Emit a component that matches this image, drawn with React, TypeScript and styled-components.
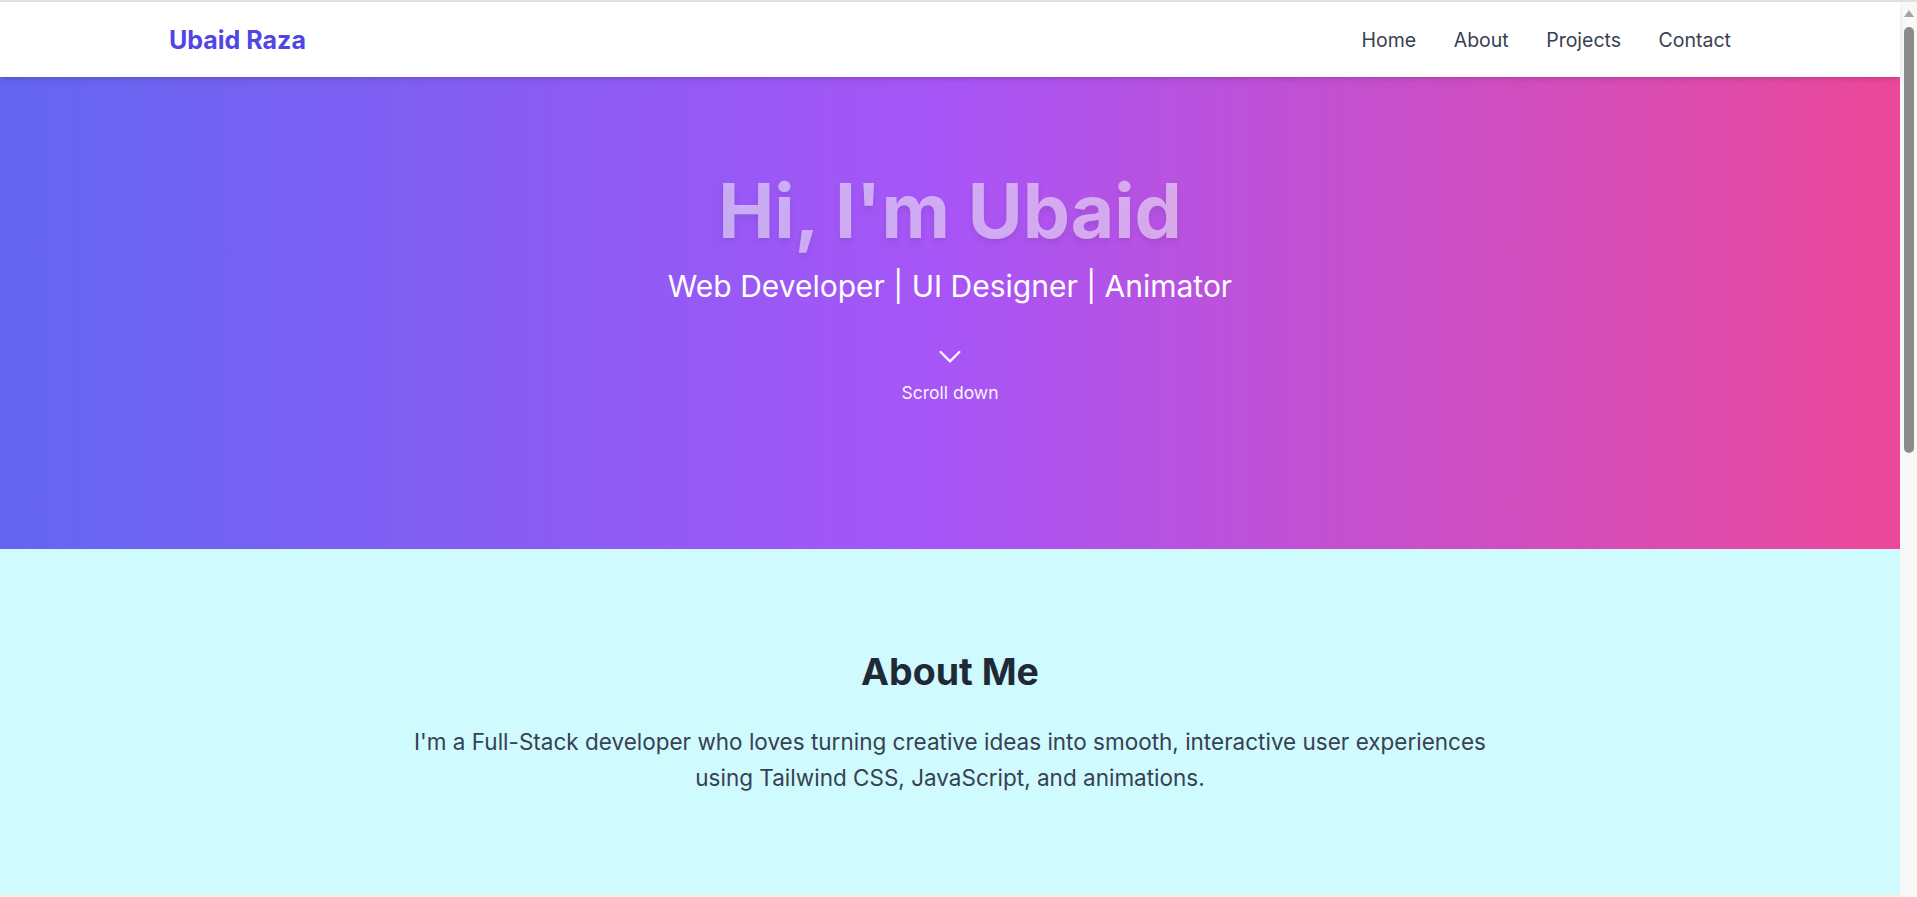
import styled, { createGlobalStyle } from "styled-components";

const GlobalStyle = createGlobalStyle`
  * {
    box-sizing: border-box;
  }

  body {
    margin: 0;
    font-family: Inter, "Noto Sans", "Liberation Sans", sans-serif;
    background: #ffffff;
  }
`;

const Page = styled.div`
  display: grid;
  grid-template-columns: 1fr 17px;
  border-top: 2px solid #e0e0e0;
`;

const Main = styled.main`
  min-width: 0;
`;

const ScrollRail = styled.div`
  position: sticky;
  top: 0;
  align-self: start;
  display: flex;
  flex-direction: column;
  align-items: center;
  height: 100vh;
  padding-top: 8px;
  background: #f8f8f8;
`;

const ArrowUp = styled.span`
  width: 0;
  height: 0;
  border-left: 5px solid transparent;
  border-right: 5px solid transparent;
  border-bottom: 7px solid #a3a3a3;
`;

const Thumb = styled.span`
  width: 10px;
  height: 426px;
  margin-top: 10px;
  border-radius: 5px;
  background: #8b8b8b;
`;

const Header = styled.header`
  position: relative;
  z-index: 10;
  height: 75px;
  background: #ffffff;
  box-shadow: 0 4px 6px -1px rgba(0, 0, 0, 0.1), 0 2px 4px -2px rgba(0, 0, 0, 0.1);
`;

const NavInner = styled.nav`
  display: flex;
  align-items: center;
  justify-content: space-between;
  height: 100%;
  padding: 0 169px;
`;

const Logo = styled.a`
  font-size: 25px;
  font-weight: 700;
  color: #4f46e5;
  text-decoration: none;
`;

const NavLinks = styled.ul`
  display: flex;
  gap: 37.5px;
  margin: 0;
  padding: 0;
  list-style: none;
`;

const NavLink = styled.a`
  font-size: 19.5px;
  color: #374151;
  text-decoration: none;
`;

const Hero = styled.section`
  display: flex;
  flex-direction: column;
  align-items: center;
  height: 472px;
  padding-top: 96px;
  background: linear-gradient(to right, #6366f1, #a855f7, #ec4899);
  color: #ffffff;
  text-align: center;
`;

const HeroTitle = styled.h1`
  margin: 0;
  font-size: 75px;
  line-height: 75px;
  font-weight: 700;
  color: rgba(255, 255, 255, 0.52);
  text-shadow: 0 4px 6px rgba(0, 0, 0, 0.08);
`;

const HeroSubtitle = styled.p`
  margin: 20px 0 0;
  font-size: 30px;
  line-height: 36px;
`;

const ScrollHint = styled.a`
  display: flex;
  flex-direction: column;
  align-items: center;
  gap: 9px;
  margin-top: 36px;
  color: rgba(255, 255, 255, 0.95);
  text-decoration: none;
  font-size: 17.5px;
  line-height: 24px;
`;

const About = styled.section`
  padding: 102px 0 99px;
  background: #cffafe;
  text-align: center;
`;

const SectionTitle = styled.h2`
  margin: 0;
  font-size: 37.5px;
  line-height: 42px;
  font-weight: 700;
  color: #1f2937;
`;

const AboutText = styled.p`
  max-width: 1100px;
  margin: 31px auto 0;
  font-size: 22.5px;
  line-height: 36px;
  color: #374151;
`;

const Projects = styled.section`
  height: 906px;
  background: #ffedd5;
`;

const links = ["Home", "About", "Projects", "Contact"];

function ChevronDown() {
  return (
    <svg width="32" height="32" viewBox="0 0 24 24" fill="none" stroke="currentColor" strokeWidth="1.8" strokeLinecap="round" strokeLinejoin="round">
      <path d="M19 9l-7 7-7-7" />
    </svg>
  );
}

export default function App() {
  return (
    <>
      <GlobalStyle />
      <Page>
        <Main>
          <Header>
            <NavInner>
              <Logo href="#">Ubaid Raza</Logo>
              <NavLinks>
                {links.map((link) => (
                  <li key={link}>
                    <NavLink href={`#${link.toLowerCase()}`}>{link}</NavLink>
                  </li>
                ))}
              </NavLinks>
            </NavInner>
          </Header>
          <Hero id="home">
            <HeroTitle>Hi, I'm Ubaid</HeroTitle>
            <HeroSubtitle>Web Developer | UI Designer | Animator</HeroSubtitle>
            <ScrollHint href="#about">
              <ChevronDown />
              <span>Scroll down</span>
            </ScrollHint>
          </Hero>
          <About id="about">
            <SectionTitle>About Me</SectionTitle>
            <AboutText>
              I'm a Full-Stack developer who loves turning creative ideas into smooth, interactive user experiences
              using Tailwind CSS, JavaScript, and animations.
            </AboutText>
          </About>
          <Projects id="projects" />
        </Main>
        <ScrollRail aria-hidden="true">
          <ArrowUp />
          <Thumb />
        </ScrollRail>
      </Page>
    </>
  );
}
